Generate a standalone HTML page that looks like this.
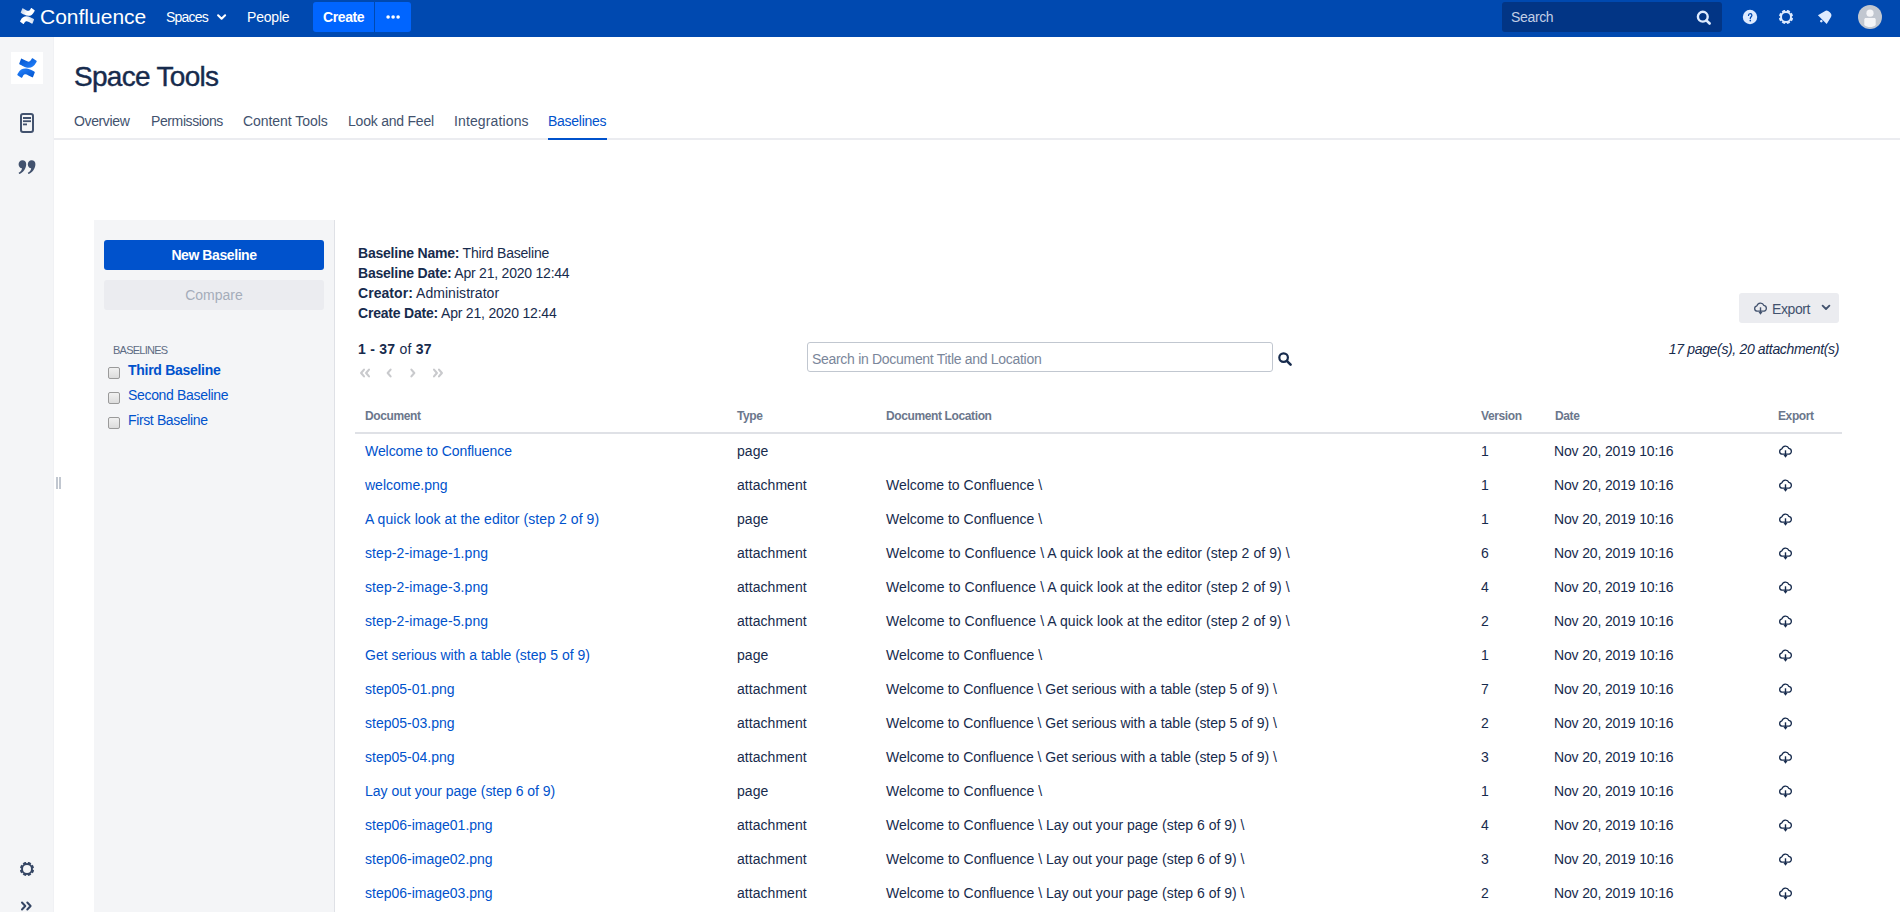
<!DOCTYPE html>
<html><head><meta charset="utf-8"><title>Space Tools - Baselines</title>
<style>
html,body{margin:0;padding:0;width:1900px;height:912px;overflow:hidden;background:#fff;}
body{position:relative;font-family:"Liberation Sans",sans-serif;}
.t{position:absolute;white-space:pre;font-family:"Liberation Sans",sans-serif;}
.r{position:absolute;display:block;}
b{font-weight:bold;}
</style></head><body>
<div class="r" style="left:0px;top:0px;width:1900px;height:37px;background:#0049B0"></div>
<svg class="r" style="left:19px;top:7.2px" width="16" height="18" viewBox="0 0 32 32" preserveAspectRatio="none"><defs>
<linearGradient id="lg1" x1="1" y1="0" x2="0" y2="0.3"><stop offset="0" stop-color="#fff" stop-opacity=".7"/><stop offset=".6" stop-color="#fff"/></linearGradient>
<linearGradient id="lg1b" x1="0" y1="0" x2="1" y2="0.3"><stop offset="0" stop-color="#fff" stop-opacity=".7"/><stop offset=".6" stop-color="#fff"/></linearGradient></defs>
<path fill="url(#lg1)" transform="translate(1.6 0)" d="M1.6 23.6c-.3.5-.7 1.1-1 1.6-.2.4-.1 1 .3 1.2l6 3.7c.4.3 1 .1 1.3-.3.3-.5.6-1 1-1.6 2.4-3.9 4.8-3.5 9.2-1.4l6 2.8c.5.2 1 0 1.2-.5l2.8-6.4c.2-.5 0-1-.4-1.2-1.2-.6-3.7-1.8-6-2.8C13.9 15.3 6.4 15.6 1.6 23.6z"/>
<path fill="url(#lg1b)" d="M30.4 8.4c.3-.5.7-1.1 1-1.6.2-.4.1-1-.3-1.2l-6-3.7c-.4-.3-1-.1-1.3.3-.3.5-.6 1-1 1.6-2.4 3.9-4.8 3.5-9.2 1.4l-6-2.8c-.5-.2-1 0-1.2.5L3.6 9.3c-.2.5 0 1 .4 1.2 1.2.6 3.7 1.8 6 2.8 8.1 3.9 15.6 3.6 20.4-4.9z"/></svg>
<div class="t " style="left:40px;top:6px;font-size:21px;line-height:21px;color:#fff;font-weight:normal;letter-spacing:0px">Confluence</div>
<div class="t " style="left:166px;top:10px;font-size:14px;line-height:14px;color:#fff;font-weight:normal;letter-spacing:-0.8px">Spaces</div>
<svg class="r" style="left:216px;top:13px" width="12" height="9" viewBox="0 0 12 9"><path d="M2.1 2.3L5.6 5.7L9.1 2.3" fill="none" stroke="#fff" stroke-width="2.1" stroke-linecap="round" stroke-linejoin="round"/></svg>
<div class="t " style="left:247px;top:10px;font-size:14px;line-height:14px;color:#fff;font-weight:normal;letter-spacing:-0.2px">People</div>
<div class="r" style="left:313px;top:2px;width:62px;height:30px;background:#0065FF;border-radius:3px 0 0 3px"></div>
<div class="r" style="left:375px;top:2px;width:36px;height:30px;background:#0065FF;border-radius:0 3px 3px 0"></div>
<div class="r" style="left:374px;top:2px;width:1px;height:30px;background:#0049B0"></div>
<div class="t " style="left:323px;top:10px;font-size:14px;line-height:14px;color:#fff;font-weight:bold;letter-spacing:-0.4px">Create</div>
<svg class="r" style="left:385px;top:14px" width="16" height="6" viewBox="0 0 16 6"><circle cx="3.1" cy="3" r="1.8" fill="#fff"/><circle cx="8.1" cy="3" r="1.8" fill="#fff"/><circle cx="13.1" cy="3" r="1.8" fill="#fff"/></svg>
<div class="r" style="left:1502px;top:2px;width:220px;height:30px;background:#023585;border-radius:3px"></div>
<div class="t " style="left:1511px;top:10px;font-size:14px;line-height:14px;color:#C2CFE6;font-weight:normal;letter-spacing:-0.34px">Search</div>
<svg class="r" style="left:1695px;top:10px" width="18" height="18" viewBox="0 0 18 18"><circle cx="7.8" cy="6.7" r="4.9" fill="none" stroke="#DEEBFF" stroke-width="2.4"/><path d="M11.4 10.3L14.6 13.5" stroke="#DEEBFF" stroke-width="2.6" stroke-linecap="round"/></svg>
<svg class="r" style="left:1742px;top:9px" width="16" height="16" viewBox="0 0 16 16"><circle cx="8" cy="8" r="7.2" fill="#DEEBFF"/><path d="M6.5 6.4c0-1.1.7-1.9 1.7-1.9s1.7.7 1.7 1.7c0 1.4-1.6 1.6-1.6 3.1v.3" fill="none" stroke="#0049B0" stroke-width="1.25" stroke-linecap="round"/><circle cx="8.3" cy="11.6" r=".85" fill="#0049B0"/></svg>
<svg class="r" style="left:1778px;top:9px" width="16" height="16" viewBox="0 0 16 16"><defs><mask id="gm1"><rect width="16" height="16" fill="#000"/><circle cx="8" cy="8" r="7.2" fill="#fff"/><circle cx="8" cy="8" r="4" fill="#000"/><rect x="7.1" y="-0.5" width="1.8" height="2.6" fill="#000" transform="rotate(0 8 8)"/><rect x="7.1" y="-0.5" width="1.8" height="2.6" fill="#000" transform="rotate(45 8 8)"/><rect x="7.1" y="-0.5" width="1.8" height="2.6" fill="#000" transform="rotate(90 8 8)"/><rect x="7.1" y="-0.5" width="1.8" height="2.6" fill="#000" transform="rotate(135 8 8)"/><rect x="7.1" y="-0.5" width="1.8" height="2.6" fill="#000" transform="rotate(180 8 8)"/><rect x="7.1" y="-0.5" width="1.8" height="2.6" fill="#000" transform="rotate(225 8 8)"/><rect x="7.1" y="-0.5" width="1.8" height="2.6" fill="#000" transform="rotate(270 8 8)"/><rect x="7.1" y="-0.5" width="1.8" height="2.6" fill="#000" transform="rotate(315 8 8)"/></mask></defs><rect width="16" height="16" fill="#DEEBFF" mask="url(#gm1)"/></svg>
<svg class="r" style="left:1810px;top:3px" width="30" height="30" viewBox="0 0 30 30"><g transform="translate(12.3 16.7) rotate(45)" fill="#DEEBFF"><path d="M-6.2 0L-4.3 -7.8Q-3.8 -10.6 0 -10.6Q3.8 -10.6 4.3 -7.8L6.2 0Z"/><circle cx="0.3" cy="1.7" r="1.3"/></g></svg>
<svg class="r" style="left:1858px;top:5px" width="24" height="24" viewBox="0 0 24 24"><circle cx="12" cy="12" r="12" fill="#C1C7D0"/><circle cx="12" cy="8.2" r="3.6" fill="#F4F5F7"/><path d="M6.3 14.6c0-.9.7-1.6 1.6-1.6h8.2c.9 0 1.6.7 1.6 1.6v5.3c-1.6 1.3-3.6 2.1-5.7 2.1s-4.1-.8-5.7-2.1z" fill="#F4F5F7"/></svg>
<div class="r" style="left:0px;top:37px;width:54px;height:875px;background:#F4F5F7"></div>
<div class="r" style="left:53px;top:37px;width:1px;height:875px;background:#F0F1F4"></div>
<div class="r" style="left:11px;top:52px;width:32px;height:32px;background:#fff"></div>
<svg class="r" style="left:17px;top:56.6px" width="20" height="22" viewBox="0 0 32 32" preserveAspectRatio="none"><defs>
<linearGradient id="lg2" x1="1" y1="1" x2="0" y2="0"><stop offset="0" stop-color="#0052CC"/><stop offset="1" stop-color="#2684FF"/></linearGradient>
<linearGradient id="lg3" x1="0" y1="0" x2="1" y2="1"><stop offset="0" stop-color="#0052CC"/><stop offset="1" stop-color="#2684FF"/></linearGradient></defs>
<path fill="url(#lg2)" d="M1.6 23.6c-.3.5-.7 1.1-1 1.6-.2.4-.1 1 .3 1.2l6 3.7c.4.3 1 .1 1.3-.3.3-.5.6-1 1-1.6 2.4-3.9 4.8-3.5 9.2-1.4l6 2.8c.5.2 1 0 1.2-.5l2.8-6.4c.2-.5 0-1-.4-1.2-1.2-.6-3.7-1.8-6-2.8C13.9 15.3 6.4 15.6 1.6 23.6z"/>
<path fill="url(#lg3)" d="M30.4 8.4c.3-.5.7-1.1 1-1.6.2-.4.1-1-.3-1.2l-6-3.7c-.4-.3-1-.1-1.3.3-.3.5-.6 1-1 1.6-2.4 3.9-4.8 3.5-9.2 1.4l-6-2.8c-.5-.2-1 0-1.2.5L3.6 9.3c-.2.5 0 1 .4 1.2 1.2.6 3.7 1.8 6 2.8 8.1 3.9 15.6 3.6 20.4-4.9z"/></svg>
<svg class="r" style="left:20px;top:113px" width="14" height="20" viewBox="0 0 14 20"><rect x="1" y="1" width="12" height="18" rx="2" fill="none" stroke="#42526E" stroke-width="2"/><rect x="3" y="4" width="8" height="2" fill="#42526E"/><rect x="3" y="7.3" width="8" height="1.8" fill="#42526E"/><rect x="3" y="10.5" width="4" height="1.8" fill="#42526E"/></svg>
<svg class="r" style="left:18px;top:159px" width="18" height="16" viewBox="0 0 18 16"><path fill="#42526E" d="M4.4 1.2c2.3 0 3.8 1.5 3.8 3.8 0 4.4-3 8.7-7 10l-.6-1.2c1.9-1 3.2-2.6 3.4-4.6C1.9 9.1.6 7.600.6 5.2.6 3 2.200 1.2 4.4 1.2zm9.200 0c2.3 0 3.8 1.5 3.8 3.8 0 4.4-3 8.7-7 10l-.6-1.2c1.9-1 3.2-2.6 3.4-4.6-2.100-.100-3.400-1.600-3.400-4 0-2.2 1.600-4 3.800-4z"/></svg>
<svg class="r" style="left:19px;top:861px" width="16" height="16" viewBox="0 0 16 16"><defs><mask id="gm2"><rect width="16" height="16" fill="#000"/><circle cx="8" cy="8" r="7.2" fill="#fff"/><circle cx="8" cy="8" r="4" fill="#000"/><rect x="7.1" y="-0.5" width="1.8" height="2.6" fill="#000" transform="rotate(0 8 8)"/><rect x="7.1" y="-0.5" width="1.8" height="2.6" fill="#000" transform="rotate(45 8 8)"/><rect x="7.1" y="-0.5" width="1.8" height="2.6" fill="#000" transform="rotate(90 8 8)"/><rect x="7.1" y="-0.5" width="1.8" height="2.6" fill="#000" transform="rotate(135 8 8)"/><rect x="7.1" y="-0.5" width="1.8" height="2.6" fill="#000" transform="rotate(180 8 8)"/><rect x="7.1" y="-0.5" width="1.8" height="2.6" fill="#000" transform="rotate(225 8 8)"/><rect x="7.1" y="-0.5" width="1.8" height="2.6" fill="#000" transform="rotate(270 8 8)"/><rect x="7.1" y="-0.5" width="1.8" height="2.6" fill="#000" transform="rotate(315 8 8)"/></mask></defs><rect width="16" height="16" fill="#344563" mask="url(#gm2)"/></svg>
<svg class="r" style="left:20px;top:901px" width="13" height="10" viewBox="0 0 13 10"><path d="M2 1.5l3.3 3.5L2 8.5M7.3 1.5l3.3 3.5-3.3 3.5" fill="none" stroke="#344563" stroke-width="2" stroke-linecap="round" stroke-linejoin="round"/></svg>
<div class="r" style="left:56px;top:477px;width:2px;height:12px;background:#C1C7D0"></div>
<div class="r" style="left:59px;top:477px;width:2px;height:12px;background:#C1C7D0"></div>
<div class="t " style="left:74px;top:63px;font-size:28px;line-height:28px;color:#172B4D;font-weight:normal;letter-spacing:-0.7px;-webkit-text-stroke:0.4px #172B4D">Space Tools</div>
<div class="r" style="left:54px;top:138px;width:1846px;height:2px;background:#EBECF0"></div>
<div class="t " style="left:74px;top:114px;font-size:14px;line-height:14px;color:#42526E;font-weight:normal;letter-spacing:-0.37px">Overview</div>
<div class="t " style="left:151px;top:114px;font-size:14px;line-height:14px;color:#42526E;font-weight:normal;letter-spacing:-0.39px">Permissions</div>
<div class="t " style="left:243px;top:114px;font-size:14px;line-height:14px;color:#42526E;font-weight:normal;letter-spacing:-0.05px">Content Tools</div>
<div class="t " style="left:348px;top:114px;font-size:14px;line-height:14px;color:#42526E;font-weight:normal;letter-spacing:-0.22px">Look and Feel</div>
<div class="t " style="left:454px;top:114px;font-size:14px;line-height:14px;color:#42526E;font-weight:normal;letter-spacing:0.13px">Integrations</div>
<div class="t " style="left:548px;top:114px;font-size:14px;line-height:14px;color:#0052CC;font-weight:normal;letter-spacing:-0.26px">Baselines</div>
<div class="r" style="left:548px;top:138px;width:59px;height:2px;background:#0052CC"></div>
<div class="r" style="left:94px;top:220px;width:240px;height:692px;background:#F4F5F7"></div>
<div class="r" style="left:334px;top:220px;width:1px;height:692px;background:#DFE1E6"></div>
<div class="r" style="left:104px;top:240px;width:220px;height:30px;background:#0052CC;border-radius:3px"></div>
<div class="t" style="left:104px;top:248px;width:220px;text-align:center;font-size:14px;line-height:14px;color:#fff;font-weight:bold;letter-spacing:-0.42px">New Baseline</div>
<div class="r" style="left:104px;top:280px;width:220px;height:30px;background:#EBECF0;border-radius:3px"></div>
<div class="t" style="left:104px;top:288px;width:220px;text-align:center;font-size:14px;line-height:14px;color:#A5ADBA;letter-spacing:0px">Compare</div>
<div class="t " style="left:113px;top:345px;font-size:11px;line-height:11px;color:#5E6C84;font-weight:normal;letter-spacing:-0.76px">BASELINES</div>
<div class="r" style="left:108px;top:367px;width:12px;height:12px;background:linear-gradient(#f1f1f1,#dcdcdc);border:1px solid #9a9a9a;box-sizing:border-box;border-radius:2px"></div>
<div class="t " style="left:128px;top:363px;font-size:14px;line-height:14px;color:#0052CC;font-weight:bold;letter-spacing:-0.285px">Third Baseline</div>
<div class="r" style="left:108px;top:392px;width:12px;height:12px;background:linear-gradient(#f1f1f1,#dcdcdc);border:1px solid #9a9a9a;box-sizing:border-box;border-radius:2px"></div>
<div class="t " style="left:128px;top:388px;font-size:14px;line-height:14px;color:#0052CC;font-weight:normal;letter-spacing:-0.33px">Second Baseline</div>
<div class="r" style="left:108px;top:417px;width:12px;height:12px;background:linear-gradient(#f1f1f1,#dcdcdc);border:1px solid #9a9a9a;box-sizing:border-box;border-radius:2px"></div>
<div class="t " style="left:128px;top:413px;font-size:14px;line-height:14px;color:#0052CC;font-weight:normal;letter-spacing:-0.37px">First Baseline</div>
<div class="t " style="left:358px;top:246px;font-size:14px;line-height:14px;color:#172B4D;font-weight:normal;letter-spacing:-0.22px"><b>Baseline Name:</b> Third Baseline</div>
<div class="t " style="left:358px;top:266px;font-size:14px;line-height:14px;color:#172B4D;font-weight:normal;letter-spacing:-0.22px"><b>Baseline Date:</b> Apr 21, 2020 12:44</div>
<div class="t " style="left:358px;top:286px;font-size:14px;line-height:14px;color:#172B4D;font-weight:normal;letter-spacing:0.05px"><b>Creator:</b> Administrator</div>
<div class="t " style="left:358px;top:306px;font-size:14px;line-height:14px;color:#172B4D;font-weight:normal;letter-spacing:-0.2px"><b>Create Date:</b> Apr 21, 2020 12:44</div>
<div class="t " style="left:358px;top:342px;font-size:14px;line-height:14px;color:#172B4D;font-weight:normal;letter-spacing:0.25px"><b>1 - 37</b> of <b>37</b></div>
<svg class="r" style="left:358px;top:367px" width="90" height="12" viewBox="0 0 90 12"><g fill="none" stroke="#C9CACD" stroke-width="2.1" stroke-linecap="round" stroke-linejoin="round"><path d="M6 2.6L3.1 6l2.9 3.4M11 2.6L8.1 6l2.9 3.4M32.6 2.6L29.7 6l2.9 3.4M53.4 2.6L56.3 6l-2.9 3.4M76 2.6L78.9 6l-2.9 3.4M81 2.6L83.9 6l-2.9 3.4"/></g></svg>
<div class="r" style="left:807px;top:342px;width:466px;height:30px;background:#fff;border:1px solid #C1C7D0;box-sizing:border-box;border-radius:3px"></div>
<div class="t " style="left:812px;top:352px;font-size:14px;line-height:14px;color:#7A869A;font-weight:normal;letter-spacing:-0.3px">Search in Document Title and Location</div>
<svg class="r" style="left:1277px;top:351px" width="16" height="16" viewBox="0 0 16 16"><circle cx="6.6" cy="6.6" r="4.3" fill="none" stroke="#172B4D" stroke-width="2.2"/><path d="M9.8 9.8l3.8 3.8" stroke="#172B4D" stroke-width="2.6" stroke-linecap="round"/></svg>
<div class="r" style="left:1739px;top:293px;width:100px;height:30px;background:#EBECF0;border-radius:3px"></div>
<svg class="r" style="left:1753px;top:301px" width="15" height="15" viewBox="0 0 15 15"><path d="M7.5 10.2H3.8A2.7 2.7 0 0 1 3.9 4.9A3.7 3.7 0 0 1 10.9 4.4A3 3 0 0 1 11.3 10.2Z" fill="none" stroke="#42526E" stroke-width="1.3" stroke-linejoin="round"/><path d="M7.5 6.3V11.8" stroke="#42526E" stroke-width="1.4"/><path d="M5.5 11.1H9.5L7.5 13.8Z" fill="#42526E"/></svg>
<div class="t " style="left:1772px;top:302px;font-size:14px;line-height:14px;color:#42526E;font-weight:normal;letter-spacing:-0.4px">Export</div>
<svg class="r" style="left:1821px;top:304px" width="10" height="8" viewBox="0 0 10 8"><path d="M1.6 1.6L5 5L8.4 1.6" fill="none" stroke="#42526E" stroke-width="1.8" stroke-linecap="round" stroke-linejoin="round"/></svg>
<div class="t" style="right:61px;top:342px;font-size:14px;line-height:14px;color:#172B4D;font-style:italic;letter-spacing:-0.344px">17 page(s), 20 attachment(s)</div>
<div class="t " style="left:365px;top:410px;font-size:12px;line-height:12px;color:#6B778C;font-weight:bold;letter-spacing:-0.38px">Document</div>
<div class="t " style="left:737px;top:410px;font-size:12px;line-height:12px;color:#6B778C;font-weight:bold;letter-spacing:-0.38px">Type</div>
<div class="t " style="left:886px;top:410px;font-size:12px;line-height:12px;color:#6B778C;font-weight:bold;letter-spacing:-0.38px">Document Location</div>
<div class="t " style="left:1481px;top:410px;font-size:12px;line-height:12px;color:#6B778C;font-weight:bold;letter-spacing:-0.38px">Version</div>
<div class="t " style="left:1555px;top:410px;font-size:12px;line-height:12px;color:#6B778C;font-weight:bold;letter-spacing:-0.38px">Date</div>
<div class="t " style="left:1778px;top:410px;font-size:12px;line-height:12px;color:#6B778C;font-weight:bold;letter-spacing:-0.38px">Export</div>
<div class="r" style="left:355px;top:432px;width:1487px;height:2px;background:#DFE1E6"></div>
<div class="t " style="left:365px;top:444px;font-size:14px;line-height:14px;color:#0052CC;font-weight:normal;letter-spacing:-0.07px">Welcome to Confluence</div>
<div class="t " style="left:737px;top:444px;font-size:14px;line-height:14px;color:#172B4D;font-weight:normal;letter-spacing:0.04px">page</div>
<div class="t " style="left:1481px;top:444px;font-size:14px;line-height:14px;color:#172B4D;font-weight:normal;">1</div>
<div class="t " style="left:1554px;top:444px;font-size:14px;line-height:14px;color:#172B4D;font-weight:normal;letter-spacing:-0.15px">Nov 20, 2019 10:16</div>
<svg class="r" style="left:1778px;top:444px" width="15" height="15" viewBox="0 0 15 15"><path d="M7.5 10.2H3.8A2.7 2.7 0 0 1 3.9 4.9A3.7 3.7 0 0 1 10.9 4.4A3 3 0 0 1 11.3 10.2Z" fill="none" stroke="#172B4D" stroke-width="1.3" stroke-linejoin="round"/><path d="M7.5 6.3V11.8" stroke="#172B4D" stroke-width="1.4"/><path d="M5.5 11.1H9.5L7.5 13.8Z" fill="#172B4D"/></svg>
<div class="t " style="left:365px;top:478px;font-size:14px;line-height:14px;color:#0052CC;font-weight:normal;letter-spacing:0.0px">welcome.png</div>
<div class="t " style="left:737px;top:478px;font-size:14px;line-height:14px;color:#172B4D;font-weight:normal;letter-spacing:0.04px">attachment</div>
<div class="t " style="left:886px;top:478px;font-size:14px;line-height:14px;color:#172B4D;font-weight:normal;letter-spacing:0.0px">Welcome to Confluence \</div>
<div class="t " style="left:1481px;top:478px;font-size:14px;line-height:14px;color:#172B4D;font-weight:normal;">1</div>
<div class="t " style="left:1554px;top:478px;font-size:14px;line-height:14px;color:#172B4D;font-weight:normal;letter-spacing:-0.15px">Nov 20, 2019 10:16</div>
<svg class="r" style="left:1778px;top:478px" width="15" height="15" viewBox="0 0 15 15"><path d="M7.5 10.2H3.8A2.7 2.7 0 0 1 3.9 4.9A3.7 3.7 0 0 1 10.9 4.4A3 3 0 0 1 11.3 10.2Z" fill="none" stroke="#172B4D" stroke-width="1.3" stroke-linejoin="round"/><path d="M7.5 6.3V11.8" stroke="#172B4D" stroke-width="1.4"/><path d="M5.5 11.1H9.5L7.5 13.8Z" fill="#172B4D"/></svg>
<div class="t " style="left:365px;top:512px;font-size:14px;line-height:14px;color:#0052CC;font-weight:normal;letter-spacing:0.077px">A quick look at the editor (step 2 of 9)</div>
<div class="t " style="left:737px;top:512px;font-size:14px;line-height:14px;color:#172B4D;font-weight:normal;letter-spacing:0.04px">page</div>
<div class="t " style="left:886px;top:512px;font-size:14px;line-height:14px;color:#172B4D;font-weight:normal;letter-spacing:0.0px">Welcome to Confluence \</div>
<div class="t " style="left:1481px;top:512px;font-size:14px;line-height:14px;color:#172B4D;font-weight:normal;">1</div>
<div class="t " style="left:1554px;top:512px;font-size:14px;line-height:14px;color:#172B4D;font-weight:normal;letter-spacing:-0.15px">Nov 20, 2019 10:16</div>
<svg class="r" style="left:1778px;top:512px" width="15" height="15" viewBox="0 0 15 15"><path d="M7.5 10.2H3.8A2.7 2.7 0 0 1 3.9 4.9A3.7 3.7 0 0 1 10.9 4.4A3 3 0 0 1 11.3 10.2Z" fill="none" stroke="#172B4D" stroke-width="1.3" stroke-linejoin="round"/><path d="M7.5 6.3V11.8" stroke="#172B4D" stroke-width="1.4"/><path d="M5.5 11.1H9.5L7.5 13.8Z" fill="#172B4D"/></svg>
<div class="t " style="left:365px;top:546px;font-size:14px;line-height:14px;color:#0052CC;font-weight:normal;letter-spacing:0.1px">step-2-image-1.png</div>
<div class="t " style="left:737px;top:546px;font-size:14px;line-height:14px;color:#172B4D;font-weight:normal;letter-spacing:0.04px">attachment</div>
<div class="t " style="left:886px;top:546px;font-size:14px;line-height:14px;color:#172B4D;font-weight:normal;letter-spacing:0.085px">Welcome to Confluence \ A quick look at the editor (step 2 of 9) \</div>
<div class="t " style="left:1481px;top:546px;font-size:14px;line-height:14px;color:#172B4D;font-weight:normal;">6</div>
<div class="t " style="left:1554px;top:546px;font-size:14px;line-height:14px;color:#172B4D;font-weight:normal;letter-spacing:-0.15px">Nov 20, 2019 10:16</div>
<svg class="r" style="left:1778px;top:546px" width="15" height="15" viewBox="0 0 15 15"><path d="M7.5 10.2H3.8A2.7 2.7 0 0 1 3.9 4.9A3.7 3.7 0 0 1 10.9 4.4A3 3 0 0 1 11.3 10.2Z" fill="none" stroke="#172B4D" stroke-width="1.3" stroke-linejoin="round"/><path d="M7.5 6.3V11.8" stroke="#172B4D" stroke-width="1.4"/><path d="M5.5 11.1H9.5L7.5 13.8Z" fill="#172B4D"/></svg>
<div class="t " style="left:365px;top:580px;font-size:14px;line-height:14px;color:#0052CC;font-weight:normal;letter-spacing:0.1px">step-2-image-3.png</div>
<div class="t " style="left:737px;top:580px;font-size:14px;line-height:14px;color:#172B4D;font-weight:normal;letter-spacing:0.04px">attachment</div>
<div class="t " style="left:886px;top:580px;font-size:14px;line-height:14px;color:#172B4D;font-weight:normal;letter-spacing:0.085px">Welcome to Confluence \ A quick look at the editor (step 2 of 9) \</div>
<div class="t " style="left:1481px;top:580px;font-size:14px;line-height:14px;color:#172B4D;font-weight:normal;">4</div>
<div class="t " style="left:1554px;top:580px;font-size:14px;line-height:14px;color:#172B4D;font-weight:normal;letter-spacing:-0.15px">Nov 20, 2019 10:16</div>
<svg class="r" style="left:1778px;top:580px" width="15" height="15" viewBox="0 0 15 15"><path d="M7.5 10.2H3.8A2.7 2.7 0 0 1 3.9 4.9A3.7 3.7 0 0 1 10.9 4.4A3 3 0 0 1 11.3 10.2Z" fill="none" stroke="#172B4D" stroke-width="1.3" stroke-linejoin="round"/><path d="M7.5 6.3V11.8" stroke="#172B4D" stroke-width="1.4"/><path d="M5.5 11.1H9.5L7.5 13.8Z" fill="#172B4D"/></svg>
<div class="t " style="left:365px;top:614px;font-size:14px;line-height:14px;color:#0052CC;font-weight:normal;letter-spacing:0.1px">step-2-image-5.png</div>
<div class="t " style="left:737px;top:614px;font-size:14px;line-height:14px;color:#172B4D;font-weight:normal;letter-spacing:0.04px">attachment</div>
<div class="t " style="left:886px;top:614px;font-size:14px;line-height:14px;color:#172B4D;font-weight:normal;letter-spacing:0.085px">Welcome to Confluence \ A quick look at the editor (step 2 of 9) \</div>
<div class="t " style="left:1481px;top:614px;font-size:14px;line-height:14px;color:#172B4D;font-weight:normal;">2</div>
<div class="t " style="left:1554px;top:614px;font-size:14px;line-height:14px;color:#172B4D;font-weight:normal;letter-spacing:-0.15px">Nov 20, 2019 10:16</div>
<svg class="r" style="left:1778px;top:614px" width="15" height="15" viewBox="0 0 15 15"><path d="M7.5 10.2H3.8A2.7 2.7 0 0 1 3.9 4.9A3.7 3.7 0 0 1 10.9 4.4A3 3 0 0 1 11.3 10.2Z" fill="none" stroke="#172B4D" stroke-width="1.3" stroke-linejoin="round"/><path d="M7.5 6.3V11.8" stroke="#172B4D" stroke-width="1.4"/><path d="M5.5 11.1H9.5L7.5 13.8Z" fill="#172B4D"/></svg>
<div class="t " style="left:365px;top:648px;font-size:14px;line-height:14px;color:#0052CC;font-weight:normal;letter-spacing:0.0px">Get serious with a table (step 5 of 9)</div>
<div class="t " style="left:737px;top:648px;font-size:14px;line-height:14px;color:#172B4D;font-weight:normal;letter-spacing:0.04px">page</div>
<div class="t " style="left:886px;top:648px;font-size:14px;line-height:14px;color:#172B4D;font-weight:normal;letter-spacing:0.0px">Welcome to Confluence \</div>
<div class="t " style="left:1481px;top:648px;font-size:14px;line-height:14px;color:#172B4D;font-weight:normal;">1</div>
<div class="t " style="left:1554px;top:648px;font-size:14px;line-height:14px;color:#172B4D;font-weight:normal;letter-spacing:-0.15px">Nov 20, 2019 10:16</div>
<svg class="r" style="left:1778px;top:648px" width="15" height="15" viewBox="0 0 15 15"><path d="M7.5 10.2H3.8A2.7 2.7 0 0 1 3.9 4.9A3.7 3.7 0 0 1 10.9 4.4A3 3 0 0 1 11.3 10.2Z" fill="none" stroke="#172B4D" stroke-width="1.3" stroke-linejoin="round"/><path d="M7.5 6.3V11.8" stroke="#172B4D" stroke-width="1.4"/><path d="M5.5 11.1H9.5L7.5 13.8Z" fill="#172B4D"/></svg>
<div class="t " style="left:365px;top:682px;font-size:14px;line-height:14px;color:#0052CC;font-weight:normal;letter-spacing:0.0px">step05-01.png</div>
<div class="t " style="left:737px;top:682px;font-size:14px;line-height:14px;color:#172B4D;font-weight:normal;letter-spacing:0.04px">attachment</div>
<div class="t " style="left:886px;top:682px;font-size:14px;line-height:14px;color:#172B4D;font-weight:normal;letter-spacing:-0.03px">Welcome to Confluence \ Get serious with a table (step 5 of 9) \</div>
<div class="t " style="left:1481px;top:682px;font-size:14px;line-height:14px;color:#172B4D;font-weight:normal;">7</div>
<div class="t " style="left:1554px;top:682px;font-size:14px;line-height:14px;color:#172B4D;font-weight:normal;letter-spacing:-0.15px">Nov 20, 2019 10:16</div>
<svg class="r" style="left:1778px;top:682px" width="15" height="15" viewBox="0 0 15 15"><path d="M7.5 10.2H3.8A2.7 2.7 0 0 1 3.9 4.9A3.7 3.7 0 0 1 10.9 4.4A3 3 0 0 1 11.3 10.2Z" fill="none" stroke="#172B4D" stroke-width="1.3" stroke-linejoin="round"/><path d="M7.5 6.3V11.8" stroke="#172B4D" stroke-width="1.4"/><path d="M5.5 11.1H9.5L7.5 13.8Z" fill="#172B4D"/></svg>
<div class="t " style="left:365px;top:716px;font-size:14px;line-height:14px;color:#0052CC;font-weight:normal;letter-spacing:0.0px">step05-03.png</div>
<div class="t " style="left:737px;top:716px;font-size:14px;line-height:14px;color:#172B4D;font-weight:normal;letter-spacing:0.04px">attachment</div>
<div class="t " style="left:886px;top:716px;font-size:14px;line-height:14px;color:#172B4D;font-weight:normal;letter-spacing:-0.03px">Welcome to Confluence \ Get serious with a table (step 5 of 9) \</div>
<div class="t " style="left:1481px;top:716px;font-size:14px;line-height:14px;color:#172B4D;font-weight:normal;">2</div>
<div class="t " style="left:1554px;top:716px;font-size:14px;line-height:14px;color:#172B4D;font-weight:normal;letter-spacing:-0.15px">Nov 20, 2019 10:16</div>
<svg class="r" style="left:1778px;top:716px" width="15" height="15" viewBox="0 0 15 15"><path d="M7.5 10.2H3.8A2.7 2.7 0 0 1 3.9 4.9A3.7 3.7 0 0 1 10.9 4.4A3 3 0 0 1 11.3 10.2Z" fill="none" stroke="#172B4D" stroke-width="1.3" stroke-linejoin="round"/><path d="M7.5 6.3V11.8" stroke="#172B4D" stroke-width="1.4"/><path d="M5.5 11.1H9.5L7.5 13.8Z" fill="#172B4D"/></svg>
<div class="t " style="left:365px;top:750px;font-size:14px;line-height:14px;color:#0052CC;font-weight:normal;letter-spacing:0.0px">step05-04.png</div>
<div class="t " style="left:737px;top:750px;font-size:14px;line-height:14px;color:#172B4D;font-weight:normal;letter-spacing:0.04px">attachment</div>
<div class="t " style="left:886px;top:750px;font-size:14px;line-height:14px;color:#172B4D;font-weight:normal;letter-spacing:-0.03px">Welcome to Confluence \ Get serious with a table (step 5 of 9) \</div>
<div class="t " style="left:1481px;top:750px;font-size:14px;line-height:14px;color:#172B4D;font-weight:normal;">3</div>
<div class="t " style="left:1554px;top:750px;font-size:14px;line-height:14px;color:#172B4D;font-weight:normal;letter-spacing:-0.15px">Nov 20, 2019 10:16</div>
<svg class="r" style="left:1778px;top:750px" width="15" height="15" viewBox="0 0 15 15"><path d="M7.5 10.2H3.8A2.7 2.7 0 0 1 3.9 4.9A3.7 3.7 0 0 1 10.9 4.4A3 3 0 0 1 11.3 10.2Z" fill="none" stroke="#172B4D" stroke-width="1.3" stroke-linejoin="round"/><path d="M7.5 6.3V11.8" stroke="#172B4D" stroke-width="1.4"/><path d="M5.5 11.1H9.5L7.5 13.8Z" fill="#172B4D"/></svg>
<div class="t " style="left:365px;top:784px;font-size:14px;line-height:14px;color:#0052CC;font-weight:normal;letter-spacing:-0.013px">Lay out your page (step 6 of 9)</div>
<div class="t " style="left:737px;top:784px;font-size:14px;line-height:14px;color:#172B4D;font-weight:normal;letter-spacing:0.04px">page</div>
<div class="t " style="left:886px;top:784px;font-size:14px;line-height:14px;color:#172B4D;font-weight:normal;letter-spacing:0.0px">Welcome to Confluence \</div>
<div class="t " style="left:1481px;top:784px;font-size:14px;line-height:14px;color:#172B4D;font-weight:normal;">1</div>
<div class="t " style="left:1554px;top:784px;font-size:14px;line-height:14px;color:#172B4D;font-weight:normal;letter-spacing:-0.15px">Nov 20, 2019 10:16</div>
<svg class="r" style="left:1778px;top:784px" width="15" height="15" viewBox="0 0 15 15"><path d="M7.5 10.2H3.8A2.7 2.7 0 0 1 3.9 4.9A3.7 3.7 0 0 1 10.9 4.4A3 3 0 0 1 11.3 10.2Z" fill="none" stroke="#172B4D" stroke-width="1.3" stroke-linejoin="round"/><path d="M7.5 6.3V11.8" stroke="#172B4D" stroke-width="1.4"/><path d="M5.5 11.1H9.5L7.5 13.8Z" fill="#172B4D"/></svg>
<div class="t " style="left:365px;top:818px;font-size:14px;line-height:14px;color:#0052CC;font-weight:normal;letter-spacing:0.0px">step06-image01.png</div>
<div class="t " style="left:737px;top:818px;font-size:14px;line-height:14px;color:#172B4D;font-weight:normal;letter-spacing:0.04px">attachment</div>
<div class="t " style="left:886px;top:818px;font-size:14px;line-height:14px;color:#172B4D;font-weight:normal;letter-spacing:0.0px">Welcome to Confluence \ Lay out your page (step 6 of 9) \</div>
<div class="t " style="left:1481px;top:818px;font-size:14px;line-height:14px;color:#172B4D;font-weight:normal;">4</div>
<div class="t " style="left:1554px;top:818px;font-size:14px;line-height:14px;color:#172B4D;font-weight:normal;letter-spacing:-0.15px">Nov 20, 2019 10:16</div>
<svg class="r" style="left:1778px;top:818px" width="15" height="15" viewBox="0 0 15 15"><path d="M7.5 10.2H3.8A2.7 2.7 0 0 1 3.9 4.9A3.7 3.7 0 0 1 10.9 4.4A3 3 0 0 1 11.3 10.2Z" fill="none" stroke="#172B4D" stroke-width="1.3" stroke-linejoin="round"/><path d="M7.5 6.3V11.8" stroke="#172B4D" stroke-width="1.4"/><path d="M5.5 11.1H9.5L7.5 13.8Z" fill="#172B4D"/></svg>
<div class="t " style="left:365px;top:852px;font-size:14px;line-height:14px;color:#0052CC;font-weight:normal;letter-spacing:0.0px">step06-image02.png</div>
<div class="t " style="left:737px;top:852px;font-size:14px;line-height:14px;color:#172B4D;font-weight:normal;letter-spacing:0.04px">attachment</div>
<div class="t " style="left:886px;top:852px;font-size:14px;line-height:14px;color:#172B4D;font-weight:normal;letter-spacing:0.0px">Welcome to Confluence \ Lay out your page (step 6 of 9) \</div>
<div class="t " style="left:1481px;top:852px;font-size:14px;line-height:14px;color:#172B4D;font-weight:normal;">3</div>
<div class="t " style="left:1554px;top:852px;font-size:14px;line-height:14px;color:#172B4D;font-weight:normal;letter-spacing:-0.15px">Nov 20, 2019 10:16</div>
<svg class="r" style="left:1778px;top:852px" width="15" height="15" viewBox="0 0 15 15"><path d="M7.5 10.2H3.8A2.7 2.7 0 0 1 3.9 4.9A3.7 3.7 0 0 1 10.9 4.4A3 3 0 0 1 11.3 10.2Z" fill="none" stroke="#172B4D" stroke-width="1.3" stroke-linejoin="round"/><path d="M7.5 6.3V11.8" stroke="#172B4D" stroke-width="1.4"/><path d="M5.5 11.1H9.5L7.5 13.8Z" fill="#172B4D"/></svg>
<div class="t " style="left:365px;top:886px;font-size:14px;line-height:14px;color:#0052CC;font-weight:normal;letter-spacing:0.0px">step06-image03.png</div>
<div class="t " style="left:737px;top:886px;font-size:14px;line-height:14px;color:#172B4D;font-weight:normal;letter-spacing:0.04px">attachment</div>
<div class="t " style="left:886px;top:886px;font-size:14px;line-height:14px;color:#172B4D;font-weight:normal;letter-spacing:0.0px">Welcome to Confluence \ Lay out your page (step 6 of 9) \</div>
<div class="t " style="left:1481px;top:886px;font-size:14px;line-height:14px;color:#172B4D;font-weight:normal;">2</div>
<div class="t " style="left:1554px;top:886px;font-size:14px;line-height:14px;color:#172B4D;font-weight:normal;letter-spacing:-0.15px">Nov 20, 2019 10:16</div>
<svg class="r" style="left:1778px;top:886px" width="15" height="15" viewBox="0 0 15 15"><path d="M7.5 10.2H3.8A2.7 2.7 0 0 1 3.9 4.9A3.7 3.7 0 0 1 10.9 4.4A3 3 0 0 1 11.3 10.2Z" fill="none" stroke="#172B4D" stroke-width="1.3" stroke-linejoin="round"/><path d="M7.5 6.3V11.8" stroke="#172B4D" stroke-width="1.4"/><path d="M5.5 11.1H9.5L7.5 13.8Z" fill="#172B4D"/></svg>
</body></html>
